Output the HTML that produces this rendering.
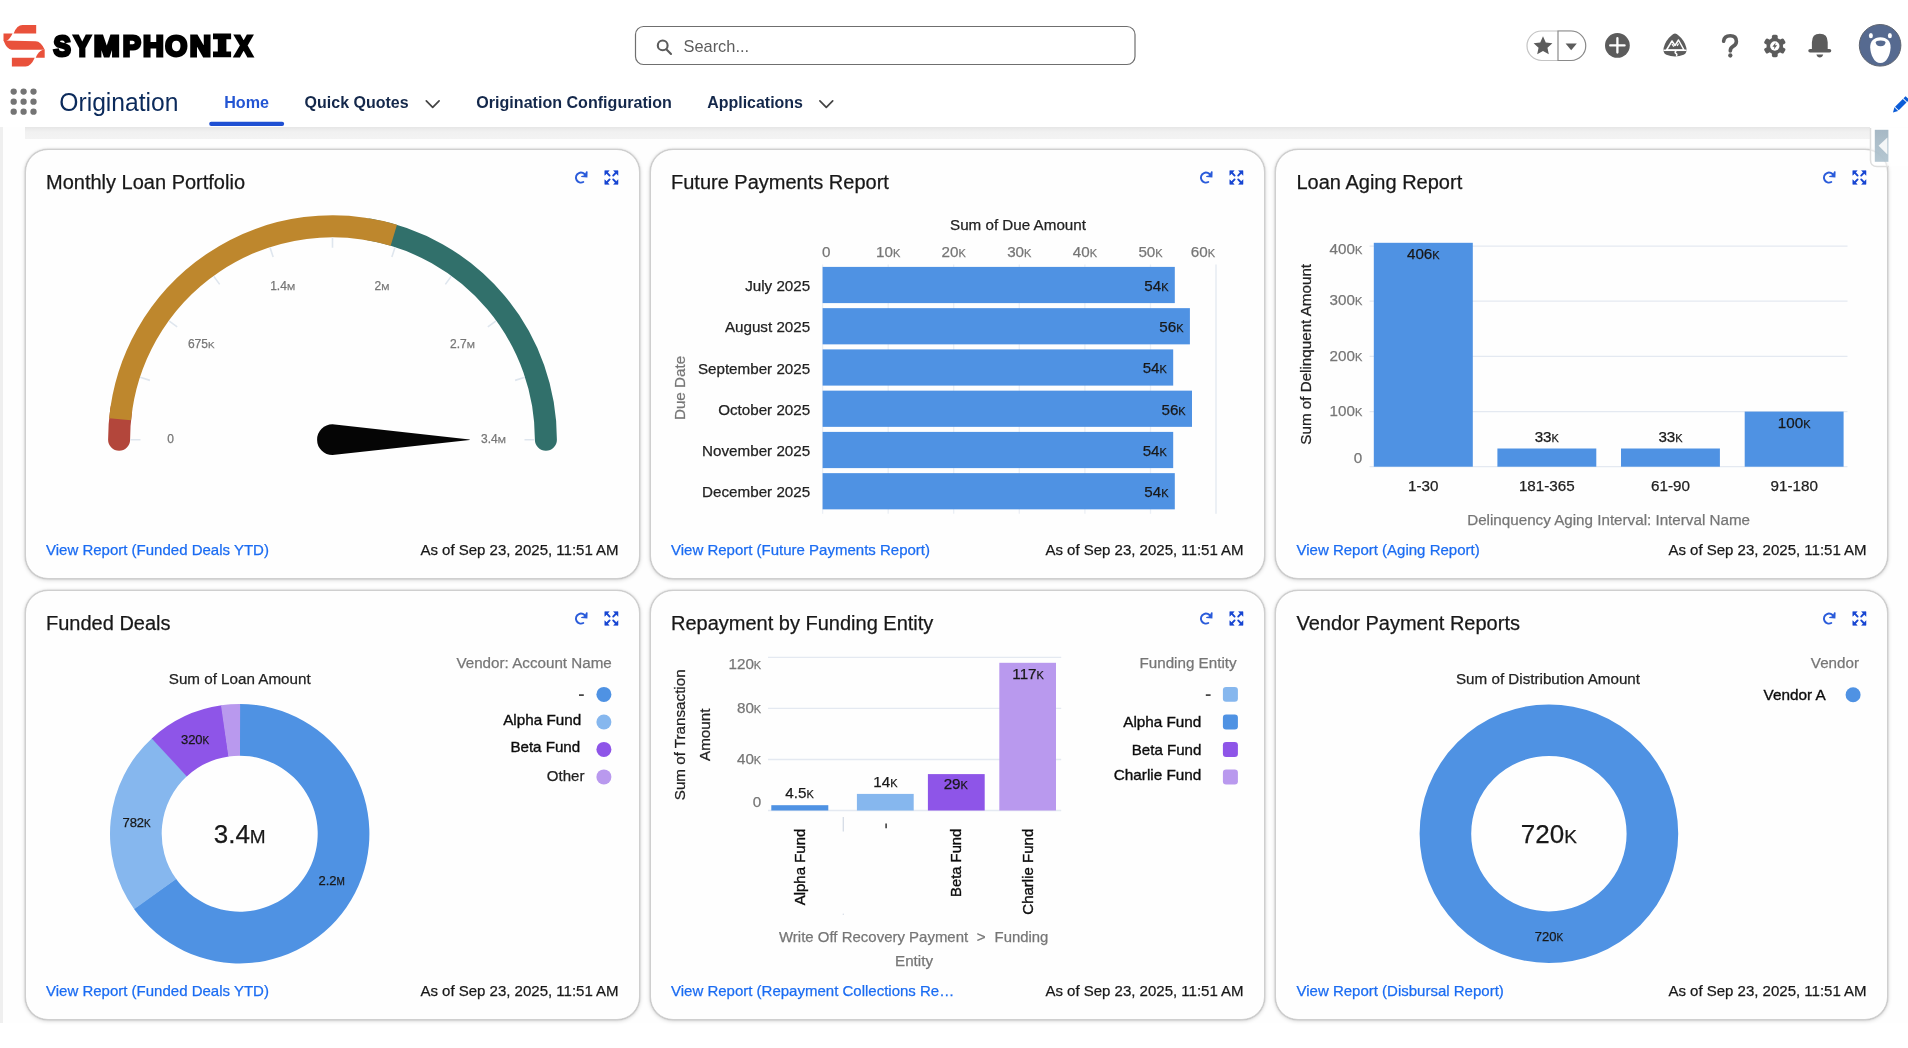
<!DOCTYPE html>
<html>
<head>
<meta charset="utf-8">
<title>Origination</title>
<style>
html,body{margin:0;padding:0;}
body{width:1908px;height:1048px;overflow:hidden;background:#fff;font-family:"Liberation Sans",sans-serif;position:relative;}
.abs{position:absolute;}
#leftstrip{left:0;top:127px;width:3px;height:896px;background:#efefef;}
#band{left:25px;top:127px;width:1845px;height:12px;background:linear-gradient(#e6e6e6,#f1f1f1 40%,#f3f3f3);}
#content{left:3px;top:127px;width:1905px;height:896px;background:#fefefe;}
.card{position:absolute;box-sizing:border-box;width:615px;height:430px;border:1px solid #cfcfcf;border-radius:23px;background:#fefefe;box-shadow:0 0 1.5px rgba(0,0,0,0.3),0 1px 4px rgba(0,0,0,0.17);}
#c1{left:25px;top:149px;}
#c2{left:650px;top:149px;}
#c3{left:1275px;top:149px;width:613px;}
#c4{left:25px;top:590px;}
#c5{left:650px;top:590px;}
#c6{left:1275px;top:590px;width:613px;}
svg text{font-family:"Liberation Sans",sans-serif;}
#ov{left:0;top:0;will-change:transform;}
</style>
</head>
<body>
<div class="abs" id="content"></div>
<div class="abs" id="leftstrip"></div>
<div class="abs" id="band"></div>
<div class="card" id="c1"></div>
<div class="card" id="c2"></div>
<div class="card" id="c3"></div>
<div class="card" id="c4"></div>
<div class="card" id="c5"></div>
<div class="card" id="c6"></div>
<svg class="abs" id="ov" width="1908" height="1048" viewBox="0 0 1908 1048">
<!--HEADER-->
<g id="logo" fill="#e9513b">
<path d="M13.6 33.4 Q17 25 22.5 25 L36.2 25 L36.2 33.4 Z"/>
<path d="M3.5 33.4 L12.6 33.6 Q9.5 40 5.8 41.2 L3.5 40.8 Z"/>
<path d="M3.5 40.6 L35.7 41.2 Q41 41.2 44.7 49.8 L11.6 49.8 Q7 49.8 3.5 40.6 Z"/>
<path d="M44.7 49.6 L44.7 57.7 L35.7 57.7 Q38.5 51.2 42.4 50 Z"/>
<path d="M11.9 57.7 L34.7 57.7 Q31 66.4 25.6 66.4 L11.9 66.4 Z"/>
</g>
<g id="wordmark" fill="#000" stroke-linejoin="miter">
<text transform="translate(53.59 56.1) scale(0.886 1)" font-size="29.3" font-weight="bold" stroke="#000" stroke-width="3.0">S</text>
<text transform="translate(73.64 56.1) scale(0.870 1)" font-size="29.3" font-weight="bold" stroke="#000" stroke-width="3.0">Y</text>
<text transform="translate(93.80 56.1) scale(1.062 1)" font-size="29.3" font-weight="bold" stroke="#000" stroke-width="3.0">M</text>
<text transform="translate(122.70 56.1) scale(0.930 1)" font-size="29.3" font-weight="bold" stroke="#000" stroke-width="3.0">P</text>
<text transform="translate(143.00 56.1) scale(0.981 1)" font-size="29.3" font-weight="bold" stroke="#000" stroke-width="3.0">H</text>
<text transform="translate(165.20 56.1) scale(0.965 1)" font-size="29.3" font-weight="bold" stroke="#000" stroke-width="3.0">O</text>
<text transform="translate(189.70 56.1) scale(1.005 1)" font-size="29.3" font-weight="bold" stroke="#000" stroke-width="3.0">N</text>
<text transform="translate(235.07 56.1) scale(0.883 1)" font-size="29.3" font-weight="bold" stroke="#000" stroke-width="3.0">X</text>
<path fill="#000" d="M213 33.4 H231.1 V39.2 H226.4 V51.5 H231.1 V57.3 H213 V51.5 H217.8 V39.2 H213 Z"/>
</g>
<rect x="635.5" y="26.5" width="499.5" height="38" rx="8" ry="8" fill="#fff" stroke="#6f6f6f" stroke-width="1.2"/>
<g fill="none" stroke="#5c5c5c" stroke-width="2.1"><circle cx="662.7" cy="45.4" r="4.9"/><path d="M666.3 49.2 L671 54" stroke-linecap="round"/></g>
<text x="683.5" y="51.7" font-size="16.4" fill="#5c5c5c">Search...</text>
<!-- star pill -->
<rect x="1527" y="31" width="58" height="29.5" rx="14.7" fill="#fff" stroke="#c4c4c4" stroke-width="1.2"/>
<path d="M1558 31 L1571 31 A14.7 14.7 0 0 1 1571 60.5 L1558 60.5 Z" fill="#fff" stroke="#8a8a8a" stroke-width="1.2"/>
<path id="star" fill="#5c5c5c" d="M1543 36.3 l2.75 6.1 6.65 0.75 -4.95 4.5 1.35 6.55 -5.8 -3.3 -5.8 3.3 1.35 -6.55 -4.95 -4.5 6.65 -0.75 Z"/>
<path fill="#5c5c5c" d="M1565.6 43.6 h11.2 l-5.6 6.6 Z"/>
<!-- plus -->
<circle cx="1617.4" cy="45.4" r="12.4" fill="#5c5c5c"/>
<path d="M1617.4 38.2 v14.4 M1610.2 45.4 h14.4" stroke="#fff" stroke-width="2.3" stroke-linecap="round"/>
<!-- trailhead -->
<g id="trail">
<path fill="#5c5c5c" d="M1675 33.5 q1.8 0 3 1.6 q6.5 5.2 8.4 12.9 q0.5 1.9 -0.2 4.1 q-0.6 2 -2.6 2.7 q-4.2 1.7 -8.6 1.7 q-4.4 0 -8.6 -1.7 q-2 -0.7 -2.6 -2.7 q-0.7 -2.2 -0.2 -4.1 q1.9 -7.7 8.4 -12.9 q1.2 -1.6 3 -1.6 Z"/>
<path fill="none" stroke="#fff" stroke-width="1.5" stroke-linejoin="round" d="M1666.5 50 L1672 41 L1675 45.5 L1678.5 40 L1684 50 Z"/>
<path fill="none" stroke="#fff" stroke-width="1.5" d="M1663.5 50.3 H1686.5"/>
<path fill="none" stroke="#fff" stroke-width="1.5" d="M1676.5 50.5 q-2.5 1.8 -0.5 3 q1.6 1 0.2 2.6"/>
<path fill="none" stroke="#fff" stroke-width="1.3" d="M1672 44 l1.8 2.6 M1678.5 43.5 l-1.4 2.4"/>
</g>
<!-- question -->
<path fill="none" stroke="#5c5c5c" stroke-width="3.6" stroke-linecap="round" d="M1723.6 41.2 Q1724.2 35.8 1730.2 35.8 Q1736.4 35.8 1736.4 41.4 Q1736.4 44.4 1733 46.4 Q1730.3 48 1730.3 51"/><circle cx="1730.3" cy="55.5" r="2.15" fill="#5c5c5c"/>
<!-- gear -->
<g id="gear" transform="translate(1774.8 46)">
<g fill="#5c5c5c">
<rect x="-2.9" y="-11.2" width="5.8" height="22.4" rx="1.6"/>
<rect x="-2.9" y="-11.2" width="5.8" height="22.4" rx="1.6" transform="rotate(60)"/>
<rect x="-2.9" y="-11.2" width="5.8" height="22.4" rx="1.6" transform="rotate(120)"/>
<circle r="8.3"/>
</g>
<circle r="4.7" fill="#fff"/>
<path fill="#5c5c5c" d="M0.9 -3.6 L-2.4 0.7 L-0.3 0.7 L-1 3.6 L2.4 -0.8 L0.3 -0.8 Z"/>
</g>
<!-- bell -->
<g fill="#5c5c5c">
<path d="M1819.8 33.8 q7.9 0 7.9 8.4 v6.9 h-15.8 v-6.9 q0 -8.4 7.9 -8.4 Z"/>
<rect x="1808.3" y="48.9" width="23" height="3.7" rx="1.8"/>
<path d="M1816.4 54.4 h6.8 q-0.8 3 -3.4 3 q-2.6 0 -3.4 -3 Z"/>
</g>
<!-- avatar -->
<g id="avatar">
<circle cx="1880.1" cy="45.3" r="20.8" fill="#566a90" stroke="#5e6470" stroke-width="1"/>
<ellipse cx="1870.9" cy="35.7" rx="2" ry="2.6" fill="#fff"/>
<ellipse cx="1889.9" cy="35.7" rx="2" ry="2.6" fill="#fff"/>
<path fill="#fff" d="M1880.4 37.3 C1887 37.3 1890.8 41.5 1890.6 47.5 C1890.3 55 1886.5 63.1 1880.4 63.1 C1874.3 63.1 1870.5 55 1870.2 47.5 C1870 41.5 1873.8 37.3 1880.4 37.3 Z"/>
<path fill="#566a90" d="M1875.7 42.6 Q1875.7 40.6 1880.6 40.6 Q1885.5 40.6 1885.5 42.6 Q1885.2 46.2 1880.6 46.2 Q1876 46.2 1875.7 42.6 Z"/>
</g>
<!-- pencil -->
<g transform="translate(1900 105.4) rotate(45)" fill="#0b5cd7">
<rect x="-2.6" y="-10.5" width="5.2" height="3"/>
<rect x="-2.6" y="-6.6" width="5.2" height="11"/>
<path d="M-2.6 5.3 h5.2 l-2.6 4.6 Z"/>
</g>
<!--NAV-->
<g fill="#747474">
<circle cx="13.7" cy="91.6" r="3.15"/><circle cx="23.6" cy="91.6" r="3.15"/><circle cx="33.5" cy="91.6" r="3.15"/>
<circle cx="13.7" cy="101.7" r="3.15"/><circle cx="23.6" cy="101.7" r="3.15"/><circle cx="33.5" cy="101.7" r="3.15"/>
<circle cx="13.7" cy="111.7" r="3.15"/><circle cx="23.6" cy="111.7" r="3.15"/><circle cx="33.5" cy="111.7" r="3.15"/>
</g>
<text x="59.3" y="111.2" font-size="24.9" fill="#0b2a5b" textLength="119.2" lengthAdjust="spacingAndGlyphs">Origination</text>
<text x="224.2" y="108.3" font-size="16.2" font-weight="bold" fill="#2355d3" textLength="44.8" lengthAdjust="spacingAndGlyphs">Home</text>
<rect x="209.2" y="121.8" width="74.9" height="4.1" rx="2" fill="#1f50d3"/>
<text x="304.6" y="108.3" font-size="16.2" font-weight="bold" fill="#14284b" textLength="104" lengthAdjust="spacingAndGlyphs">Quick Quotes</text>
<path d="M426.3 100.8 L432.7 107.3 L439.1 100.8" fill="none" stroke="#444" stroke-width="1.7" stroke-linecap="round" stroke-linejoin="round"/>
<text x="476.3" y="108.3" font-size="16.2" font-weight="bold" fill="#14284b" textLength="195.6" lengthAdjust="spacingAndGlyphs">Origination Configuration</text>
<text x="707.2" y="108.3" font-size="16.2" font-weight="bold" fill="#14284b" textLength="95.8" lengthAdjust="spacingAndGlyphs">Applications</text>
<path d="M819.9 100.8 L826.3 107.3 L832.7 100.8" fill="none" stroke="#444" stroke-width="1.7" stroke-linecap="round" stroke-linejoin="round"/>
<!--ICONS-->
<g transform="translate(611.4 177.5)">
<path d="M6.2 -2.3 A5 5 0 1 0 3.9 3.9" fill="none" stroke="#2a5bda" stroke-width="1.9" stroke-linecap="round" transform="translate(-32 0.6)"/>
<path d="M-23.8 -6.6 L-22.4 -6.3 L-22.6 -0.5 L-29 -0.9 L-28.6 -1.9 L-25.6 -2.6 Z" fill="#2a5bda" transform="translate(-1.4 0.4)"/>
<g fill="#1846d2" stroke="#1846d2" transform="scale(0.94)">
<path d="M-7 -7.3 h4.6 l-4.6 4.9 Z" stroke-width="0.6" stroke-linejoin="round"/>
<path d="M7 -7.3 h-4.6 l4.6 4.9 Z" stroke-width="0.6" stroke-linejoin="round"/>
<path d="M-7 7.3 h4.6 l-4.6 -4.9 Z" stroke-width="0.6" stroke-linejoin="round"/>
<path d="M7 7.3 h-4.6 l4.6 -4.9 Z" stroke-width="0.6" stroke-linejoin="round"/>
<path d="M-5 -5.3 L-1.9 -2 M5 -5.3 L1.9 -2 M-5 5.3 L-1.9 2 M5 5.3 L1.9 2" stroke-width="2" stroke-linecap="round" fill="none"/>
</g>
</g>
<g transform="translate(1236.4 177.5)">
<path d="M6.2 -2.3 A5 5 0 1 0 3.9 3.9" fill="none" stroke="#2a5bda" stroke-width="1.9" stroke-linecap="round" transform="translate(-32 0.6)"/>
<path d="M-23.8 -6.6 L-22.4 -6.3 L-22.6 -0.5 L-29 -0.9 L-28.6 -1.9 L-25.6 -2.6 Z" fill="#2a5bda" transform="translate(-1.4 0.4)"/>
<g fill="#1846d2" stroke="#1846d2" transform="scale(0.94)">
<path d="M-7 -7.3 h4.6 l-4.6 4.9 Z" stroke-width="0.6" stroke-linejoin="round"/>
<path d="M7 -7.3 h-4.6 l4.6 4.9 Z" stroke-width="0.6" stroke-linejoin="round"/>
<path d="M-7 7.3 h4.6 l-4.6 -4.9 Z" stroke-width="0.6" stroke-linejoin="round"/>
<path d="M7 7.3 h-4.6 l4.6 -4.9 Z" stroke-width="0.6" stroke-linejoin="round"/>
<path d="M-5 -5.3 L-1.9 -2 M5 -5.3 L1.9 -2 M-5 5.3 L-1.9 2 M5 5.3 L1.9 2" stroke-width="2" stroke-linecap="round" fill="none"/>
</g>
</g>
<g transform="translate(1859.4 177.5)">
<path d="M6.2 -2.3 A5 5 0 1 0 3.9 3.9" fill="none" stroke="#2a5bda" stroke-width="1.9" stroke-linecap="round" transform="translate(-32 0.6)"/>
<path d="M-23.8 -6.6 L-22.4 -6.3 L-22.6 -0.5 L-29 -0.9 L-28.6 -1.9 L-25.6 -2.6 Z" fill="#2a5bda" transform="translate(-1.4 0.4)"/>
<g fill="#1846d2" stroke="#1846d2" transform="scale(0.94)">
<path d="M-7 -7.3 h4.6 l-4.6 4.9 Z" stroke-width="0.6" stroke-linejoin="round"/>
<path d="M7 -7.3 h-4.6 l4.6 4.9 Z" stroke-width="0.6" stroke-linejoin="round"/>
<path d="M-7 7.3 h4.6 l-4.6 -4.9 Z" stroke-width="0.6" stroke-linejoin="round"/>
<path d="M7 7.3 h-4.6 l4.6 -4.9 Z" stroke-width="0.6" stroke-linejoin="round"/>
<path d="M-5 -5.3 L-1.9 -2 M5 -5.3 L1.9 -2 M-5 5.3 L-1.9 2 M5 5.3 L1.9 2" stroke-width="2" stroke-linecap="round" fill="none"/>
</g>
</g>
<g transform="translate(611.4 618.5)">
<path d="M6.2 -2.3 A5 5 0 1 0 3.9 3.9" fill="none" stroke="#2a5bda" stroke-width="1.9" stroke-linecap="round" transform="translate(-32 0.6)"/>
<path d="M-23.8 -6.6 L-22.4 -6.3 L-22.6 -0.5 L-29 -0.9 L-28.6 -1.9 L-25.6 -2.6 Z" fill="#2a5bda" transform="translate(-1.4 0.4)"/>
<g fill="#1846d2" stroke="#1846d2" transform="scale(0.94)">
<path d="M-7 -7.3 h4.6 l-4.6 4.9 Z" stroke-width="0.6" stroke-linejoin="round"/>
<path d="M7 -7.3 h-4.6 l4.6 4.9 Z" stroke-width="0.6" stroke-linejoin="round"/>
<path d="M-7 7.3 h4.6 l-4.6 -4.9 Z" stroke-width="0.6" stroke-linejoin="round"/>
<path d="M7 7.3 h-4.6 l4.6 -4.9 Z" stroke-width="0.6" stroke-linejoin="round"/>
<path d="M-5 -5.3 L-1.9 -2 M5 -5.3 L1.9 -2 M-5 5.3 L-1.9 2 M5 5.3 L1.9 2" stroke-width="2" stroke-linecap="round" fill="none"/>
</g>
</g>
<g transform="translate(1236.4 618.5)">
<path d="M6.2 -2.3 A5 5 0 1 0 3.9 3.9" fill="none" stroke="#2a5bda" stroke-width="1.9" stroke-linecap="round" transform="translate(-32 0.6)"/>
<path d="M-23.8 -6.6 L-22.4 -6.3 L-22.6 -0.5 L-29 -0.9 L-28.6 -1.9 L-25.6 -2.6 Z" fill="#2a5bda" transform="translate(-1.4 0.4)"/>
<g fill="#1846d2" stroke="#1846d2" transform="scale(0.94)">
<path d="M-7 -7.3 h4.6 l-4.6 4.9 Z" stroke-width="0.6" stroke-linejoin="round"/>
<path d="M7 -7.3 h-4.6 l4.6 4.9 Z" stroke-width="0.6" stroke-linejoin="round"/>
<path d="M-7 7.3 h4.6 l-4.6 -4.9 Z" stroke-width="0.6" stroke-linejoin="round"/>
<path d="M7 7.3 h-4.6 l4.6 -4.9 Z" stroke-width="0.6" stroke-linejoin="round"/>
<path d="M-5 -5.3 L-1.9 -2 M5 -5.3 L1.9 -2 M-5 5.3 L-1.9 2 M5 5.3 L1.9 2" stroke-width="2" stroke-linecap="round" fill="none"/>
</g>
</g>
<g transform="translate(1859.4 618.5)">
<path d="M6.2 -2.3 A5 5 0 1 0 3.9 3.9" fill="none" stroke="#2a5bda" stroke-width="1.9" stroke-linecap="round" transform="translate(-32 0.6)"/>
<path d="M-23.8 -6.6 L-22.4 -6.3 L-22.6 -0.5 L-29 -0.9 L-28.6 -1.9 L-25.6 -2.6 Z" fill="#2a5bda" transform="translate(-1.4 0.4)"/>
<g fill="#1846d2" stroke="#1846d2" transform="scale(0.94)">
<path d="M-7 -7.3 h4.6 l-4.6 4.9 Z" stroke-width="0.6" stroke-linejoin="round"/>
<path d="M7 -7.3 h-4.6 l4.6 4.9 Z" stroke-width="0.6" stroke-linejoin="round"/>
<path d="M-7 7.3 h4.6 l-4.6 -4.9 Z" stroke-width="0.6" stroke-linejoin="round"/>
<path d="M7 7.3 h-4.6 l4.6 -4.9 Z" stroke-width="0.6" stroke-linejoin="round"/>
<path d="M-5 -5.3 L-1.9 -2 M5 -5.3 L1.9 -2 M-5 5.3 L-1.9 2 M5 5.3 L1.9 2" stroke-width="2" stroke-linecap="round" fill="none"/>
</g>
</g>
<!--CARD1-->
<text x="46" y="189.2" font-size="20" fill="#181818" stroke="#181818" stroke-width="0.25">Monthly Loan Portfolio</text>
<path d="M119.10 439.70 A213.4 213.4 0 0 1 121.18 410.00" fill="none" stroke="#b3463b" stroke-width="22" stroke-linecap="round"/>
<path d="M369.56 229.54 A213.4 213.4 0 0 1 545.90 439.70" fill="none" stroke="#31706b" stroke-width="22" stroke-linecap="round"/>
<path d="M120.08 419.25 A213.4 213.4 0 0 1 393.82 235.30" fill="none" stroke="#be872d" stroke-width="22"/>
<path d="M130.30 439.70L140.50 439.70 M140.20 377.22L149.90 380.37 M168.92 320.85L177.17 326.85 M213.65 276.12L219.65 284.37 M270.02 247.40L273.17 257.10 M332.50 237.50L332.50 247.70 M394.98 247.40L391.83 257.10 M451.35 276.12L445.35 284.37 M496.08 320.85L487.83 326.85 M524.80 377.22L515.10 380.37 M534.70 439.70L524.50 439.70" stroke="#dfe6ee" stroke-width="1.6" fill="none"/>
<text x="167.2" y="442.8" font-size="12" fill="#767676" stroke="#767676" stroke-width="0.25">0<tspan font-size="9.8"></tspan></text>
<text x="187.9" y="348.2" font-size="12" fill="#767676" stroke="#767676" stroke-width="0.25">675<tspan font-size="9.8">K</tspan></text>
<text x="270.2" y="289.5" font-size="12" fill="#767676" stroke="#767676" stroke-width="0.25">1.4<tspan font-size="9.8">M</tspan></text>
<text x="374.6" y="289.5" font-size="12" fill="#767676" stroke="#767676" stroke-width="0.25">2<tspan font-size="9.8">M</tspan></text>
<text x="450" y="348" font-size="12" fill="#767676" stroke="#767676" stroke-width="0.25">2.7<tspan font-size="9.8">M</tspan></text>
<text x="481" y="443" font-size="12" fill="#767676" stroke="#767676" stroke-width="0.25">3.4<tspan font-size="9.8">M</tspan></text>
<path d="M332.5 424.3 A15.4 15.4 0 0 0 332.5 455.1 L469.7 439.9 L469.7 439.5 Z" fill="#050505"/>
<text x="46" y="555.4" font-size="15" fill="#1b6cf2" stroke="#1b6cf2" stroke-width="0.25">View Report (Funded Deals YTD)</text>
<text x="618.6" y="555.4" font-size="15" fill="#181818" text-anchor="end" stroke="#181818" stroke-width="0.25">As of Sep 23, 2025, 11:51 AM</text>
<!--CARD2-->
<text x="671" y="189.2" font-size="20" fill="#181818" stroke="#181818" stroke-width="0.25">Future Payments Report</text>
<text x="1018" y="230.3" font-size="15.2" fill="#222" text-anchor="middle" stroke="#222" stroke-width="0.25">Sum of Due Amount</text>
<path d="M822.6 264.5V513.8" stroke="#ebeff5" stroke-width="1.3"/>
<path d="M888.2 264.5V513.8" stroke="#ebeff5" stroke-width="1.3"/>
<path d="M953.7 264.5V513.8" stroke="#ebeff5" stroke-width="1.3"/>
<path d="M1019.3 264.5V513.8" stroke="#ebeff5" stroke-width="1.3"/>
<path d="M1084.9 264.5V513.8" stroke="#ebeff5" stroke-width="1.3"/>
<path d="M1150.5 264.5V513.8" stroke="#ebeff5" stroke-width="1.3"/>
<path d="M1216.0 264.5V513.8" stroke="#e2e8f0" stroke-width="1.3"/>
<text x="822.1" y="256.8" font-size="15.2" fill="#767676" text-anchor="start" stroke="#767676" stroke-width="0.25">0</text>
<text x="888.2" y="256.8" font-size="15.2" fill="#767676" text-anchor="middle" stroke="#767676" stroke-width="0.25">10<tspan font-size="11">K</tspan></text>
<text x="953.7" y="256.8" font-size="15.2" fill="#767676" text-anchor="middle" stroke="#767676" stroke-width="0.25">20<tspan font-size="11">K</tspan></text>
<text x="1019.3" y="256.8" font-size="15.2" fill="#767676" text-anchor="middle" stroke="#767676" stroke-width="0.25">30<tspan font-size="11">K</tspan></text>
<text x="1084.9" y="256.8" font-size="15.2" fill="#767676" text-anchor="middle" stroke="#767676" stroke-width="0.25">40<tspan font-size="11">K</tspan></text>
<text x="1150.5" y="256.8" font-size="15.2" fill="#767676" text-anchor="middle" stroke="#767676" stroke-width="0.25">50<tspan font-size="11">K</tspan></text>
<text x="1215.0" y="256.8" font-size="15.2" fill="#767676" text-anchor="end" stroke="#767676" stroke-width="0.25">60<tspan font-size="11">K</tspan></text>
<rect x="822.6" y="266.90" width="352.2" height="36.2" fill="#4f92e3"/>
<text x="810.2" y="291.1" font-size="15.2" fill="#222" text-anchor="end" stroke="#222" stroke-width="0.25">July 2025</text>
<text x="1168.5" y="290.9" font-size="15.2" fill="#181818" text-anchor="end" stroke="#181818" stroke-width="0.25">54<tspan font-size="11">K</tspan></text>
<rect x="822.6" y="308.15" width="367.3" height="36.2" fill="#4f92e3"/>
<text x="810.2" y="332.3" font-size="15.2" fill="#222" text-anchor="end" stroke="#222" stroke-width="0.25">August 2025</text>
<text x="1183.6" y="332.1" font-size="15.2" fill="#181818" text-anchor="end" stroke="#181818" stroke-width="0.25">56<tspan font-size="11">K</tspan></text>
<rect x="822.6" y="349.40" width="350.6" height="36.2" fill="#4f92e3"/>
<text x="810.2" y="373.6" font-size="15.2" fill="#222" text-anchor="end" stroke="#222" stroke-width="0.25">September 2025</text>
<text x="1166.9" y="373.4" font-size="15.2" fill="#181818" text-anchor="end" stroke="#181818" stroke-width="0.25">54<tspan font-size="11">K</tspan></text>
<rect x="822.6" y="390.65" width="369.4" height="36.2" fill="#4f92e3"/>
<text x="810.2" y="414.8" font-size="15.2" fill="#222" text-anchor="end" stroke="#222" stroke-width="0.25">October 2025</text>
<text x="1185.7" y="414.6" font-size="15.2" fill="#181818" text-anchor="end" stroke="#181818" stroke-width="0.25">56<tspan font-size="11">K</tspan></text>
<rect x="822.6" y="431.90" width="350.6" height="36.2" fill="#4f92e3"/>
<text x="810.2" y="456.1" font-size="15.2" fill="#222" text-anchor="end" stroke="#222" stroke-width="0.25">November 2025</text>
<text x="1166.9" y="455.9" font-size="15.2" fill="#181818" text-anchor="end" stroke="#181818" stroke-width="0.25">54<tspan font-size="11">K</tspan></text>
<rect x="822.6" y="473.15" width="352.2" height="36.2" fill="#4f92e3"/>
<text x="810.2" y="497.3" font-size="15.2" fill="#222" text-anchor="end" stroke="#222" stroke-width="0.25">December 2025</text>
<text x="1168.5" y="497.1" font-size="15.2" fill="#181818" text-anchor="end" stroke="#181818" stroke-width="0.25">54<tspan font-size="11">K</tspan></text>
<text transform="translate(685 388) rotate(-90)" font-size="15.2" fill="#767676" text-anchor="middle" stroke="#767676" stroke-width="0.25">Due Date</text>
<text x="671" y="555.4" font-size="15" fill="#1b6cf2" stroke="#1b6cf2" stroke-width="0.25">View Report (Future Payments Report)</text>
<text x="1243.6" y="555.4" font-size="15" fill="#181818" text-anchor="end" stroke="#181818" stroke-width="0.25">As of Sep 23, 2025, 11:51 AM</text>
<!--CARD3-->
<text x="1296.5" y="189.2" font-size="20" fill="#181818" stroke="#181818" stroke-width="0.25">Loan Aging Report</text>
<path d="M1369.5 466.7H1847.5" stroke="#e4e9f1" stroke-width="1.3"/>
<path d="M1369.5 411.6H1847.5" stroke="#e4e9f1" stroke-width="1.3"/>
<path d="M1369.5 356.4H1847.5" stroke="#e4e9f1" stroke-width="1.3"/>
<path d="M1369.5 301.2H1847.5" stroke="#e4e9f1" stroke-width="1.3"/>
<path d="M1369.5 246.1H1847.5" stroke="#e4e9f1" stroke-width="1.3"/>
<text x="1362.3" y="253.9" font-size="15.2" fill="#767676" text-anchor="end" stroke="#767676" stroke-width="0.25">400<tspan font-size="11">K</tspan></text>
<text x="1362.3" y="305.3" font-size="15.2" fill="#767676" text-anchor="end" stroke="#767676" stroke-width="0.25">300<tspan font-size="11">K</tspan></text>
<text x="1362.3" y="360.7" font-size="15.2" fill="#767676" text-anchor="end" stroke="#767676" stroke-width="0.25">200<tspan font-size="11">K</tspan></text>
<text x="1362.3" y="415.8" font-size="15.2" fill="#767676" text-anchor="end" stroke="#767676" stroke-width="0.25">100<tspan font-size="11">K</tspan></text>
<text x="1362.3" y="462.7" font-size="15.2" fill="#767676" text-anchor="end" stroke="#767676" stroke-width="0.25">0</text>
<rect x="1373.8" y="242.8" width="99.0" height="223.9" fill="#4f92e3"/>
<text x="1423.3" y="259.1" font-size="15.2" fill="#181818" text-anchor="middle" stroke="#181818" stroke-width="0.25">406<tspan font-size="11">K</tspan></text>
<text x="1423.3" y="490.6" font-size="15.2" fill="#222" text-anchor="middle" stroke="#222" stroke-width="0.25">1-30</text>
<rect x="1497.4" y="448.5" width="98.9" height="18.2" fill="#4f92e3"/>
<text x="1546.8" y="442.2" font-size="15.2" fill="#181818" text-anchor="middle" stroke="#181818" stroke-width="0.25">33<tspan font-size="11">K</tspan></text>
<text x="1546.8" y="490.6" font-size="15.2" fill="#222" text-anchor="middle" stroke="#222" stroke-width="0.25">181-365</text>
<rect x="1621.0" y="448.5" width="98.9" height="18.2" fill="#4f92e3"/>
<text x="1670.5" y="442.2" font-size="15.2" fill="#181818" text-anchor="middle" stroke="#181818" stroke-width="0.25">33<tspan font-size="11">K</tspan></text>
<text x="1670.5" y="490.6" font-size="15.2" fill="#222" text-anchor="middle" stroke="#222" stroke-width="0.25">61-90</text>
<rect x="1744.7" y="411.6" width="98.9" height="55.1" fill="#4f92e3"/>
<text x="1794.2" y="427.9" font-size="15.2" fill="#181818" text-anchor="middle" stroke="#181818" stroke-width="0.25">100<tspan font-size="11">K</tspan></text>
<text x="1794.2" y="490.6" font-size="15.2" fill="#222" text-anchor="middle" stroke="#222" stroke-width="0.25">91-180</text>
<text transform="translate(1310.8 354.3) rotate(-90)" font-size="15.2" fill="#222" text-anchor="middle" stroke="#222" stroke-width="0.25">Sum of Delinquent Amount</text>
<text x="1608.6" y="525.4" font-size="15.2" fill="#767676" text-anchor="middle" stroke="#767676" stroke-width="0.25">Delinquency Aging Interval: Interval Name</text>
<text x="1296.5" y="555.4" font-size="15" fill="#1b6cf2" stroke="#1b6cf2" stroke-width="0.25">View Report (Aging Report)</text>
<text x="1866.6" y="555.4" font-size="15" fill="#181818" text-anchor="end" stroke="#181818" stroke-width="0.25">As of Sep 23, 2025, 11:51 AM</text>
<!--CARD4-->
<text x="46" y="630.2" font-size="20" fill="#181818" stroke="#181818" stroke-width="0.25">Funded Deals</text>
<text x="239.7" y="684.1" font-size="15.2" fill="#222" text-anchor="middle" stroke="#222" stroke-width="0.25">Sum of Loan Amount</text>
<path d="M239.70 704.00A129.7 129.7 0 1 1 133.85 908.65L176.04 878.77A78.0 78.0 0 1 0 239.70 755.70Z" fill="#4f92e3"/>
<path d="M134.24 909.20A129.7 129.7 0 0 1 152.24 737.92L187.10 776.10A78.0 78.0 0 0 0 176.28 879.11Z" fill="#86b7ee"/>
<path d="M151.74 738.38A129.7 129.7 0 0 1 221.65 705.26L228.84 756.46A78.0 78.0 0 0 0 186.80 776.38Z" fill="#8e55e8"/>
<path d="M220.98 705.36A129.7 129.7 0 0 1 240.15 704.00L239.97 755.70A78.0 78.0 0 0 0 228.44 756.52Z" fill="#b999ee"/>
<text x="195.1" y="743.8" font-size="13" fill="#181818" text-anchor="middle" stroke="#181818" stroke-width="0.25">320<tspan font-size="10">K</tspan></text>
<text x="136.6" y="826.9" font-size="13" fill="#181818" text-anchor="middle" stroke="#181818" stroke-width="0.25">782<tspan font-size="10">K</tspan></text>
<text x="331.7" y="885.4" font-size="13" fill="#181818" text-anchor="middle" stroke="#181818" stroke-width="0.25">2.2<tspan font-size="10">M</tspan></text>
<text x="239.7" y="843.4" font-size="26" fill="#181818" text-anchor="middle" stroke="#181818" stroke-width="0.25">3.4<tspan font-size="19">M</tspan></text>
<text x="611.8" y="667.9" font-size="15.2" fill="#767676" text-anchor="end" stroke="#767676" stroke-width="0.25">Vendor: Account Name</text>
<circle cx="603.9" cy="694.4" r="7.5" fill="#4f92e3"/>
<circle cx="603.9" cy="722" r="7.5" fill="#86b7ee"/>
<circle cx="603.9" cy="749.4" r="7.5" fill="#8e55e8"/>
<circle cx="603.9" cy="776.9" r="7.5" fill="#b999ee"/>
<path d="M579 695.1H583.8" stroke="#333" stroke-width="1.6"/>
<text x="503.2" y="724.5" font-size="15" fill="#0c0c0c" stroke="#0c0c0c" stroke-width="0.35" textLength="78" lengthAdjust="spacingAndGlyphs">Alpha Fund</text>
<text x="510.4" y="752.4" font-size="15" fill="#0c0c0c" stroke="#0c0c0c" stroke-width="0.35" textLength="69.8" lengthAdjust="spacingAndGlyphs">Beta Fund</text>
<text x="546.8" y="781.3" font-size="15" fill="#222" textLength="37.6" lengthAdjust="spacingAndGlyphs" stroke="#222" stroke-width="0.25">Other</text>
<text x="46" y="996" font-size="15" fill="#1b6cf2" stroke="#1b6cf2" stroke-width="0.25">View Report (Funded Deals YTD)</text>
<text x="618.6" y="996" font-size="15" fill="#181818" text-anchor="end" stroke="#181818" stroke-width="0.25">As of Sep 23, 2025, 11:51 AM</text>
<!--CARD5-->
<text x="671" y="630.2" font-size="20" fill="#181818" stroke="#181818" stroke-width="0.25">Repayment by Funding Entity</text>
<path d="M768 810.5H1061.2" stroke="#e4e9f1" stroke-width="1.3"/>
<path d="M768 759.5H1061.2" stroke="#e4e9f1" stroke-width="1.3"/>
<path d="M768 708.4H1061.2" stroke="#e4e9f1" stroke-width="1.3"/>
<path d="M768 657.4H1061.2" stroke="#e4e9f1" stroke-width="1.3"/>
<text x="761.2" y="669.3" font-size="15.2" fill="#767676" text-anchor="end" stroke="#767676" stroke-width="0.25">120<tspan font-size="11">K</tspan></text>
<text x="761.2" y="712.6" font-size="15.2" fill="#767676" text-anchor="end" stroke="#767676" stroke-width="0.25">80<tspan font-size="11">K</tspan></text>
<text x="761.2" y="763.7" font-size="15.2" fill="#767676" text-anchor="end" stroke="#767676" stroke-width="0.25">40<tspan font-size="11">K</tspan></text>
<text x="761.2" y="806.6" font-size="15.2" fill="#767676" text-anchor="end" stroke="#767676" stroke-width="0.25">0</text>
<rect x="771.3" y="805.2" width="57.0" height="5.3" fill="#4f92e3"/>
<text x="799.5" y="798.4" font-size="15.2" fill="#181818" text-anchor="middle" stroke="#181818" stroke-width="0.25">4.5<tspan font-size="11">K</tspan></text>
<rect x="856.9" y="793.9" width="56.8" height="16.6" fill="#86b7ee"/>
<text x="885.4" y="787.2" font-size="15.2" fill="#181818" text-anchor="middle" stroke="#181818" stroke-width="0.25">14<tspan font-size="11">K</tspan></text>
<rect x="927.9" y="774.1" width="56.8" height="36.4" fill="#8e55e8"/>
<text x="955.8" y="789.4" font-size="15.2" fill="#181818" text-anchor="middle" stroke="#181818" stroke-width="0.25">29<tspan font-size="11">K</tspan></text>
<rect x="999.3" y="662.8" width="56.7" height="147.7" fill="#b999ee"/>
<text x="1028.1" y="679.1" font-size="15.2" fill="#181818" text-anchor="middle" stroke="#181818" stroke-width="0.25">117<tspan font-size="11">K</tspan></text>
<path d="M843.3 816.9V831.5" stroke="#d5dce6" stroke-width="1.3"/>
<circle cx="843.3" cy="914.2" r="0.7" fill="#d5dce6"/>
<path d="M886.1 823.5V828.2" stroke="#333" stroke-width="1.5"/>
<text transform="translate(805 828.7) rotate(-90)" font-size="15" fill="#0c0c0c" stroke="#0c0c0c" stroke-width="0.35" text-anchor="end" textLength="76.6" lengthAdjust="spacingAndGlyphs">Alpha Fund</text>
<text transform="translate(961 828.7) rotate(-90)" font-size="15" fill="#0c0c0c" stroke="#0c0c0c" stroke-width="0.35" text-anchor="end" textLength="68.2" lengthAdjust="spacingAndGlyphs">Beta Fund</text>
<text transform="translate(1033 828.7) rotate(-90)" font-size="15" fill="#0c0c0c" stroke="#0c0c0c" stroke-width="0.35" text-anchor="end" textLength="86" lengthAdjust="spacingAndGlyphs">Charlie Fund</text>
<text transform="translate(685 734.8) rotate(-90)" font-size="15.2" fill="#222" text-anchor="middle" stroke="#222" stroke-width="0.25">Sum of Transaction</text>
<text transform="translate(710.3 734.8) rotate(-90)" font-size="15.2" fill="#222" text-anchor="middle" stroke="#222" stroke-width="0.25">Amount</text>
<text x="779" y="941.8" font-size="15" fill="#767676" textLength="189.2" lengthAdjust="spacingAndGlyphs" stroke="#767676" stroke-width="0.25">Write Off Recovery Payment</text>
<text x="981.3" y="941.8" font-size="15.2" fill="#767676" text-anchor="middle" stroke="#767676" stroke-width="0.25">&gt;</text>
<text x="994.6" y="941.8" font-size="15" fill="#767676" textLength="53.7" lengthAdjust="spacingAndGlyphs" stroke="#767676" stroke-width="0.25">Funding</text>
<text x="914" y="966.2" font-size="15.2" fill="#767676" text-anchor="middle" stroke="#767676" stroke-width="0.25">Entity</text>
<text x="1236.6" y="667.9" font-size="15.2" fill="#767676" text-anchor="end" stroke="#767676" stroke-width="0.25">Funding Entity</text>
<rect x="1222.9" y="686.9" width="15" height="14.9" rx="3.2" fill="#86b7ee"/>
<rect x="1222.9" y="714.6" width="15" height="14.9" rx="3.2" fill="#4f92e3"/>
<rect x="1222.9" y="742.1" width="15" height="14.9" rx="3.2" fill="#8e55e8"/>
<rect x="1222.9" y="769.6" width="15" height="14.9" rx="3.2" fill="#b999ee"/>
<path d="M1205.8 695.1H1210.6" stroke="#333" stroke-width="1.6"/>
<text x="1123.2" y="726.6" font-size="15" fill="#0c0c0c" stroke="#0c0c0c" stroke-width="0.35" textLength="78.2" lengthAdjust="spacingAndGlyphs">Alpha Fund</text>
<text x="1131.8" y="754.5" font-size="15" fill="#0c0c0c" stroke="#0c0c0c" stroke-width="0.35" textLength="69.6" lengthAdjust="spacingAndGlyphs">Beta Fund</text>
<text x="1113.8" y="780.3" font-size="15" fill="#0c0c0c" stroke="#0c0c0c" stroke-width="0.35" textLength="87.6" lengthAdjust="spacingAndGlyphs">Charlie Fund</text>
<text x="671" y="996" font-size="15" fill="#1b6cf2" stroke="#1b6cf2" stroke-width="0.25">View Report (Repayment Collections Re…</text>
<text x="1243.6" y="996" font-size="15" fill="#181818" text-anchor="end" stroke="#181818" stroke-width="0.25">As of Sep 23, 2025, 11:51 AM</text>
<!--CARD6-->
<text x="1296.5" y="630.2" font-size="20" fill="#181818" stroke="#181818" stroke-width="0.25">Vendor Payment Reports</text>
<text x="1548" y="684.1" font-size="15.2" fill="#222" text-anchor="middle" stroke="#222" stroke-width="0.25">Sum of Distribution Amount</text>
<circle cx="1548.9" cy="833.7" r="103.5" fill="none" stroke="#4f92e3" stroke-width="51.6"/>
<text x="1548.9" y="843.4" font-size="26" fill="#181818" text-anchor="middle" stroke="#181818" stroke-width="0.25">720<tspan font-size="19">K</tspan></text>
<text x="1548.9" y="940.9" font-size="13" fill="#181818" text-anchor="middle" stroke="#181818" stroke-width="0.25">720<tspan font-size="10">K</tspan></text>
<text x="1859" y="667.9" font-size="15.2" fill="#767676" text-anchor="end" stroke="#767676" stroke-width="0.25">Vendor</text>
<text x="1763.6" y="699.9" font-size="15" fill="#0c0c0c" stroke="#0c0c0c" stroke-width="0.35" textLength="62.2" lengthAdjust="spacingAndGlyphs">Vendor A</text>
<circle cx="1853.1" cy="694.8" r="7.5" fill="#4f92e3"/>
<text x="1296.5" y="996" font-size="15" fill="#1b6cf2" stroke="#1b6cf2" stroke-width="0.25">View Report (Disbursal Report)</text>
<text x="1866.6" y="996" font-size="15" fill="#181818" text-anchor="end" stroke="#181818" stroke-width="0.25">As of Sep 23, 2025, 11:51 AM</text>
<!--TAB-->
<path d="M1870.5 127.5 V160 Q1870.5 166.5 1877 166.5 H1908 V127.5 Z" fill="#ffffff" fill-opacity="0.55"/>
<path d="M1870.5 128 V160 Q1870.5 166.5 1877 166.5 H1889" fill="none" stroke="#dedede" stroke-width="1.5"/>
<defs><linearGradient id="tg" x1="0" y1="0" x2="0" y2="1"><stop offset="0" stop-color="#9db1bf"/><stop offset="1" stop-color="#adc1cd"/></linearGradient></defs>
<rect x="1874.8" y="129.8" width="13.6" height="32" fill="url(#tg)" fill-opacity="0.9"/>
<path d="M1878.6 145.8 L1887.4 137.6 V154.4 Z" fill="#f4f6f7"/>
</svg>
</body>
</html>
